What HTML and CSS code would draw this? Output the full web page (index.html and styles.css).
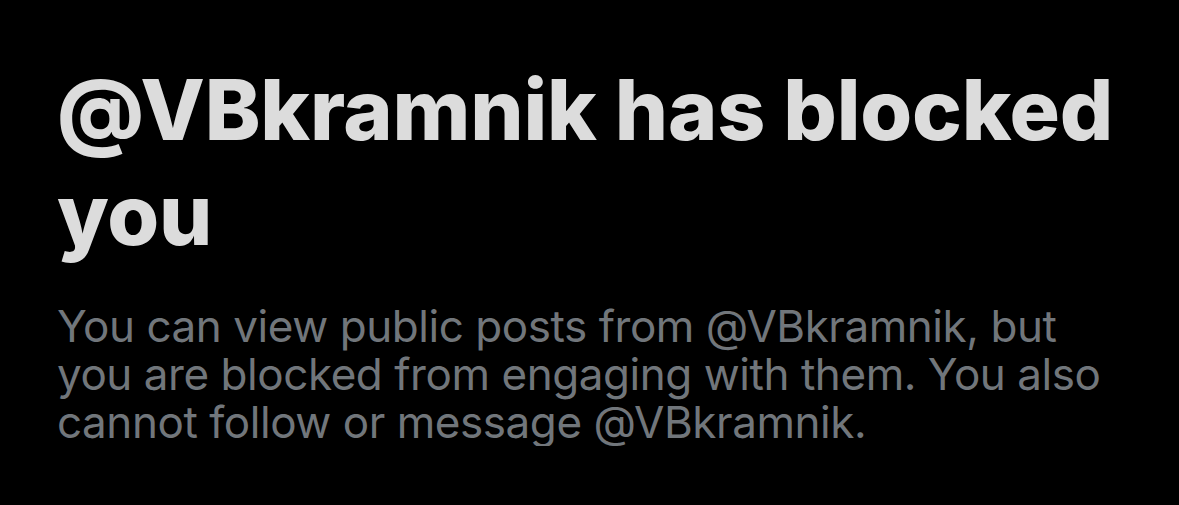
FILE: index.html
```html
<!DOCTYPE html>
<html>
<head>
<meta charset="utf-8">
<link rel="stylesheet" href="styles.css">
</head>
<body>
<main class="blocked">
  <h1 class="title">@VBkramnik has blocked you</h1>
  <p class="desc">You can view public posts from @VBkramnik, but you are blocked from engaging with them. You also cannot follow or message @VBkramnik.</p>
</main>
</body>
</html>
```
FILE: styles.css
```css
html, body {
  margin: 0;
  padding: 0;
  background: #000;
}
.blocked {
  padding: 57px 0 0 57px;
  width: 1070px;
  box-sizing: content-box;
}
.title {
  margin: 0;
  font-family: Inter, "Liberation Sans", Arial, sans-serif;
  font-weight: 800;
  font-size: 84px;
  line-height: 105px;
  color: #dcdcdc;
  letter-spacing: -0.2px;
}
.desc {
  margin: 35px 0 0;
  font-family: Inter, "Liberation Sans", Arial, sans-serif;
  font-size: 44px;
  line-height: 48px;
  color: #71767b;
  letter-spacing: -0.45px;
}
```
